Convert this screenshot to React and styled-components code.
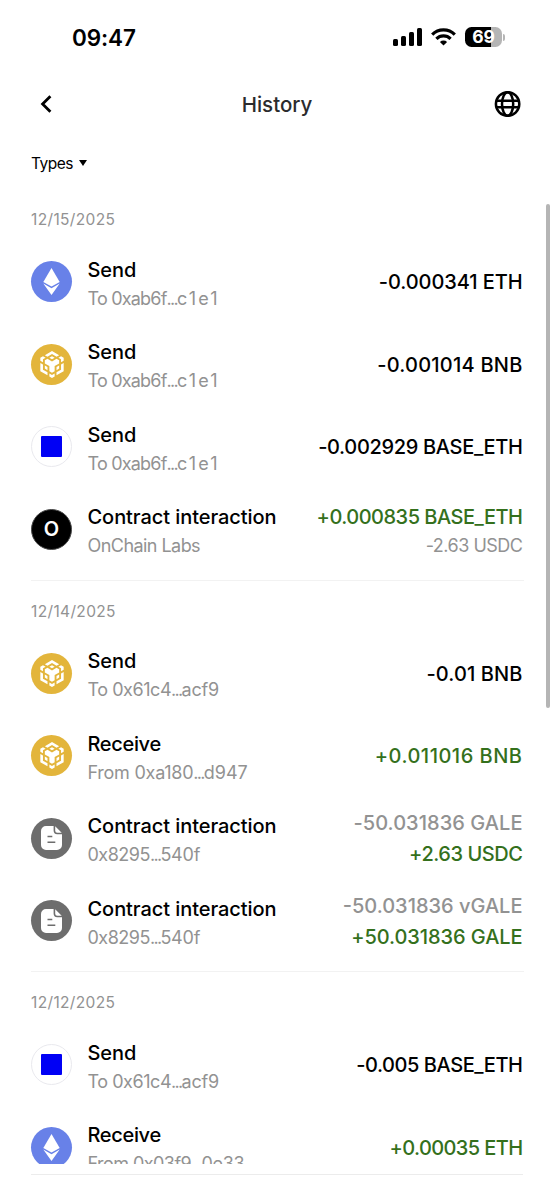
import styled, { createGlobalStyle } from "styled-components";

const GlobalStyle = createGlobalStyle`
  * {
    box-sizing: border-box;
  }
  body {
    margin: 0;
    background-color: #fff;
    font-family: Inter, "Liberation Sans", Arial, sans-serif;
  }
`;

const Screen = styled.div`
  display: flex;
  flex-direction: column;
  width: 554px;
  height: 1200px;
  overflow: hidden;
  background-color: #fff;
  color: #000;
`;

const StatusBar = styled.div`
  display: flex;
  align-items: center;
  justify-content: space-between;
  height: 74px;
  padding: 0 49px 0 72px;
`;
const Clock = styled.span`
  padding-top: 1px;
  font-size: 22.5px;
  font-weight: 600;
  letter-spacing: -0.1px;
`;
const StatusIcons = styled.div`
  display: flex;
  align-items: center;
  gap: 9px;
`;
const Battery = styled.div`
  display: flex;
  align-items: center;
  gap: 1px;
`;
const BatteryBody = styled.div`
  display: flex;
  align-items: center;
  justify-content: center;
  width: 37px;
  height: 20px;
  border-radius: 6.5px;
  background: linear-gradient(to right, #000 69%, #b5b5b5 69%);
  color: #fff;
  font-size: 17.5px;
  font-weight: 700;
  line-height: 20px;
`;
const BatteryTip = styled.div`
  width: 2px;
  height: 7px;
  border-radius: 0 2px 2px 0;
  background-color: #b5b5b5;
`;

const Header = styled.header`
  display: grid;
  grid-template-columns: 60px 1fr 60px;
  align-items: center;
  height: 60px;
  padding: 0 31px;
`;
const Title = styled.h1`
  margin: 0;
  text-align: center;
  color: #2b2b2d;
  font-size: 20.5px;
  font-weight: 500;
`;
const IconButton = styled.button`
  all: unset;
  display: flex;
  justify-self: ${(props) => props.$side};
  cursor: pointer;
`;

const Filter = styled.button`
  all: unset;
  display: flex;
  align-items: center;
  gap: 6px;
  height: 58px;
  padding: 0 31px;
  font-size: 15.5px;
  letter-spacing: -0.5px;
  cursor: pointer;
`;

const ListArea = styled.div`
  display: flex;
  flex-shrink: 0;
  height: 971.5px;
  margin-bottom: 10.5px;
  overflow: hidden;
`;
const List = styled.main`
  flex: 1;
  padding-left: 31px;
`;
const Scrollbar = styled.div`
  width: 4px;
  height: 504px;
  margin: 12px 4px 0 22px;
  border-radius: 2px;
  background-color: #b5b5b5;
`;
const BottomLine = styled.div`
  height: 1px;
  flex-shrink: 0;
  margin: 0 31px;
  background-color: #ececec;
`;

const Group = styled.section`
  height: 391.5px;
`;
const GroupDate = styled.h2`
  margin: 0;
  padding-top: 6px;
  height: 48.8px;
  line-height: 44px;
  color: #929292;
  font-size: 15.5px;
  font-weight: 400;
  letter-spacing: 0.35px;
`;
const Divider = styled.hr`
  height: 1px;
  margin: 9.5px 0 0;
  border: 0;
  background-color: #f2f2f2;
`;

const Row = styled.div`
  display: flex;
  align-items: center;
  height: 82.4px;
  padding-right: 1.5px;
`;
const TokenIcon = styled.div`
  display: flex;
  align-items: center;
  justify-content: center;
  flex-shrink: 0;
  width: 41px;
  height: 41px;
  margin-right: 15.5px;
  border-radius: 50%;
  border: ${(props) => (props.$border ? `1px solid ${props.$border}` : "none")};
  background-color: ${(props) => props.$bg};
  color: #fff;
`;
const BaseSquare = styled.div`
  width: 21px;
  height: 21px;
  border-radius: 1px;
  background-color: #0000f5;
`;
const Letter = styled.span`
  font-size: 20px;
  font-weight: 600;
`;
const Info = styled.div`
  flex: 1;
  padding-top: 3px;
  white-space: nowrap;
`;
const Action = styled.div`
  font-size: 20px;
  font-weight: 500;
  line-height: 30px;
  letter-spacing: ${(props) => props.$spacing}px;
`;
const Detail = styled.div`
  color: #929292;
  font-size: 18px;
  line-height: 27px;
`;
const DetailPart = styled.span`
  letter-spacing: ${(props) => props.$spacing}px;
`;
const Amounts = styled.div`
  padding-top: 2px;
  text-align: right;
  white-space: nowrap;
`;
const amountColors = { out: "#000", in: "#34701c", muted: "#929292" };
const Amount = styled.div`
  color: ${(props) => amountColors[props.$tone]};
  font-size: ${(props) => (props.$small ? "18px" : "20px")};
  font-weight: ${(props) => (props.$small ? 400 : 500)};
  line-height: ${(props) => (props.$small ? "26px" : "31px")};
  letter-spacing: ${(props) => props.$spacing}px;
`;

const Eth = () => (
  <TokenIcon $bg="#6881e8">
    <svg width="17" height="27" viewBox="0 0 17 27" fill="#fff">
      <path d="M8.5 0 16.7 13.9 8.5 18.6.3 13.9z" />
      <path d="M.3 15.5 8.5 20.2l8.2-4.7L8.5 27z" />
    </svg>
  </TokenIcon>
);

const Bnb = () => (
  <TokenIcon $bg="#e3b53b">
    <svg width="28" height="27" viewBox="0 0 24 24" fill="#fff">
      <path d="M5.631 3.676 12.001 0l6.367 3.676-2.34 1.358L12 2.716 7.972 5.034l-2.34-1.358Zm12.737 4.636-2.34-1.358L12 9.272 7.972 6.954l-2.34 1.358v2.716l4.026 2.318v4.636L12 19.341l2.341-1.359v-4.636l4.027-2.318V8.312Zm0 7.352v-2.716l-2.34 1.358v2.716l2.34-1.358Zm1.663.96-4.027 2.318v2.717l6.368-3.677V10.63l-2.34 1.358v4.636Zm-2.34-10.63 2.34 1.358v2.716l2.341-1.358V5.994l-2.34-1.358-2.342 1.358ZM9.657 19.926v2.716L12 24l2.341-1.358v-2.716l-2.34 1.358-2.343-1.358Zm-4.027-4.262 2.341 1.358v-2.716l-2.34-1.358v2.716Zm4.027-9.67L12 7.352l2.342-1.358-2.342-1.358-2.343 1.358Zm-5.69 1.358 2.341-1.358-2.34-1.358-2.342 1.358v2.716l2.341 1.358V7.352Zm0 4.636-2.34-1.358v7.354l6.367 3.677v-2.717L3.968 16.624v-4.636Z" />
    </svg>
  </TokenIcon>
);

const Base = () => (
  <TokenIcon $bg="#fff" $border="#e9e9ee">
    <BaseSquare />
  </TokenIcon>
);

const OnChain = () => (
  <TokenIcon $bg="#000" $border="#4a4a4a">
    <Letter>O</Letter>
  </TokenIcon>
);

const Contract = () => (
  <TokenIcon $bg="#6d6d6d">
    <svg width="21" height="24" viewBox="0 0 21 24">
      <path d="M5 0h7.6v4.6a3.6 3.6 0 0 0 3.6 3.6H21V19a5 5 0 0 1-5 5H5a5 5 0 0 1-5-5V5a5 5 0 0 1 5-5z" fill="#fff" />
      <path d="M14.2.3 20.7 6.7h-4.5a2 2 0 0 1-2-2z" fill="#fff" />
      <path d="M6.5 10.5h4.8M6.5 16.3h7.8" stroke="#6d6d6d" strokeWidth="1.5" fill="none" />
    </svg>
  </TokenIcon>
);

const icons = { eth: Eth, bnb: Bnb, base: Base, onchain: OnChain, contract: Contract };

const actionSpacing = { Send: -0.1, Receive: -0.33, "Contract interaction": -0.06 };

const groups = [
  {
    date: "12/15/2025",
    rows: [
      {
        icon: "eth",
        action: "Send",
        detail: ["To 0xab6f", "c1e1"],
        track: [-0.8, 2.1],
        amounts: [{ text: "-0.000341 ETH", tone: "out", track: -0.08 }],
      },
      {
        icon: "bnb",
        action: "Send",
        detail: ["To 0xab6f", "c1e1"],
        track: [-0.8, 2.1],
        amounts: [{ text: "-0.001014 BNB", tone: "out", track: 0.23 }],
      },
      {
        icon: "base",
        action: "Send",
        detail: ["To 0xab6f", "c1e1"],
        track: [-0.8, 2.1],
        amounts: [{ text: "-0.002929 BASE_ETH", tone: "out", track: -0.33 }],
      },
      {
        icon: "onchain",
        action: "Contract interaction",
        detail: ["OnChain Labs"],
        track: [-0.55],
        amounts: [
          { text: "+0.000835 BASE_ETH", tone: "in", track: -0.5 },
          { text: "-2.63 USDC", tone: "muted", small: true, track: -0.5 },
        ],
      },
    ],
  },
  {
    date: "12/14/2025",
    rows: [
      {
        icon: "bnb",
        action: "Send",
        detail: ["To 0x61c4", "acf9"],
        track: [-0.45, -0.2],
        amounts: [{ text: "-0.01 BNB", tone: "out", track: 0.1 }],
      },
      {
        icon: "bnb",
        action: "Receive",
        detail: ["From 0xa180", "d947"],
        track: [-0.25, 0],
        amounts: [{ text: "+0.011016 BNB", tone: "in", track: 0.5 }],
      },
      {
        icon: "contract",
        action: "Contract interaction",
        detail: ["0x8295", "540f"],
        track: [-0.5, -0.2],
        amounts: [
          { text: "-50.031836 GALE", tone: "muted", track: 0.05 },
          { text: "+2.63 USDC", tone: "in", track: -0.45 },
        ],
      },
      {
        icon: "contract",
        action: "Contract interaction",
        detail: ["0x8295", "540f"],
        track: [-0.5, -0.2],
        amounts: [
          { text: "-50.031836 vGALE", tone: "muted", track: 0 },
          { text: "+50.031836 GALE", tone: "in", track: -0.07 },
        ],
      },
    ],
  },
  {
    date: "12/12/2025",
    rows: [
      {
        icon: "base",
        action: "Send",
        detail: ["To 0x61c4", "acf9"],
        track: [-0.45, -0.2],
        amounts: [{ text: "-0.005 BASE_ETH", tone: "out", track: -0.43 }],
      },
      {
        icon: "eth",
        action: "Receive",
        detail: ["From 0x03f9", "0e33"],
        track: [-0.55, -0.4],
        amounts: [{ text: "+0.00035 ETH", tone: "in", track: -0.6 }],
      },
    ],
  },
];

const HistoryRow = ({ icon, action, detail, track, amounts }) => {
  const Icon = icons[icon];
  return (
    <Row>
      <Icon />
      <Info>
        <Action $spacing={actionSpacing[action]}>{action}</Action>
        <Detail>
          <DetailPart $spacing={track[0]}>{detail[0]}</DetailPart>
          {detail[1] && (
            <>
              <DetailPart $spacing={-1.7}>...</DetailPart>
              <DetailPart $spacing={track[1]}>{detail[1]}</DetailPart>
            </>
          )}
        </Detail>
      </Info>
      <Amounts>
        {amounts.map((amount) => (
          <Amount key={amount.text} $tone={amount.tone} $small={amount.small} $spacing={amount.track}>
            {amount.text}
          </Amount>
        ))}
      </Amounts>
    </Row>
  );
};

const App = () => {
  return (
    <Screen>
      <GlobalStyle />
      <StatusBar>
        <Clock>09:47</Clock>
        <StatusIcons>
          <svg width="29" height="18" viewBox="0 0 29 18">
            <rect x="0" y="11" width="5" height="7" rx="1.5" />
            <rect x="8" y="8" width="5" height="10" rx="1.5" />
            <rect x="16" y="4" width="5" height="14" rx="1.5" />
            <rect x="24" y="0" width="5" height="18" rx="1.5" />
          </svg>
          <svg width="25" height="18" viewBox="0 0 25 18" fill="none" stroke="#000" strokeWidth="3.2">
            <path d="M1.2 6.6a16 16 0 0 1 22.6 0" />
            <path d="M5.4 10.9a10 10 0 0 1 14.2 0" />
            <path d="M12.5 17.6 8.9 14a5.2 5.2 0 0 1 7.2 0z" fill="#000" stroke="none" />
          </svg>
          <Battery>
            <BatteryBody>69</BatteryBody>
            <BatteryTip />
          </Battery>
        </StatusIcons>
      </StatusBar>
      <Header>
        <IconButton $side="start" aria-label="Back">
          <svg width="22" height="18" viewBox="0 0 22 18" fill="none" stroke="#000" strokeWidth="2.8">
            <path d="M19.4 1.2 11.6 9l7.8 7.8" />
          </svg>
        </IconButton>
        <Title>History</Title>
        <IconButton $side="end" aria-label="Network">
          <svg width="30" height="28" viewBox="0 0 30 28" fill="none" stroke="#000" strokeWidth="2.5">
            <circle cx="14.6" cy="14" r="11.7" />
            <ellipse cx="14.6" cy="14" rx="5.6" ry="11.7" />
            <path d="M3.6 10.7h22M3.6 17.3h22" />
          </svg>
        </IconButton>
      </Header>
      <Filter>
        Types
        <svg width="8" height="6" viewBox="0 0 8 6">
          <path d="M0 0h8L4 6z" />
        </svg>
      </Filter>
      <ListArea>
        <List>
          {groups.map((group, i) => (
            <Group key={group.date}>
              <GroupDate>{group.date}</GroupDate>
              {group.rows.map((row, j) => (
                <HistoryRow key={j} {...row} />
              ))}
              {i < groups.length - 1 && <Divider />}
            </Group>
          ))}
        </List>
        <Scrollbar />
      </ListArea>
      <BottomLine />
    </Screen>
  );
};

export default App;
